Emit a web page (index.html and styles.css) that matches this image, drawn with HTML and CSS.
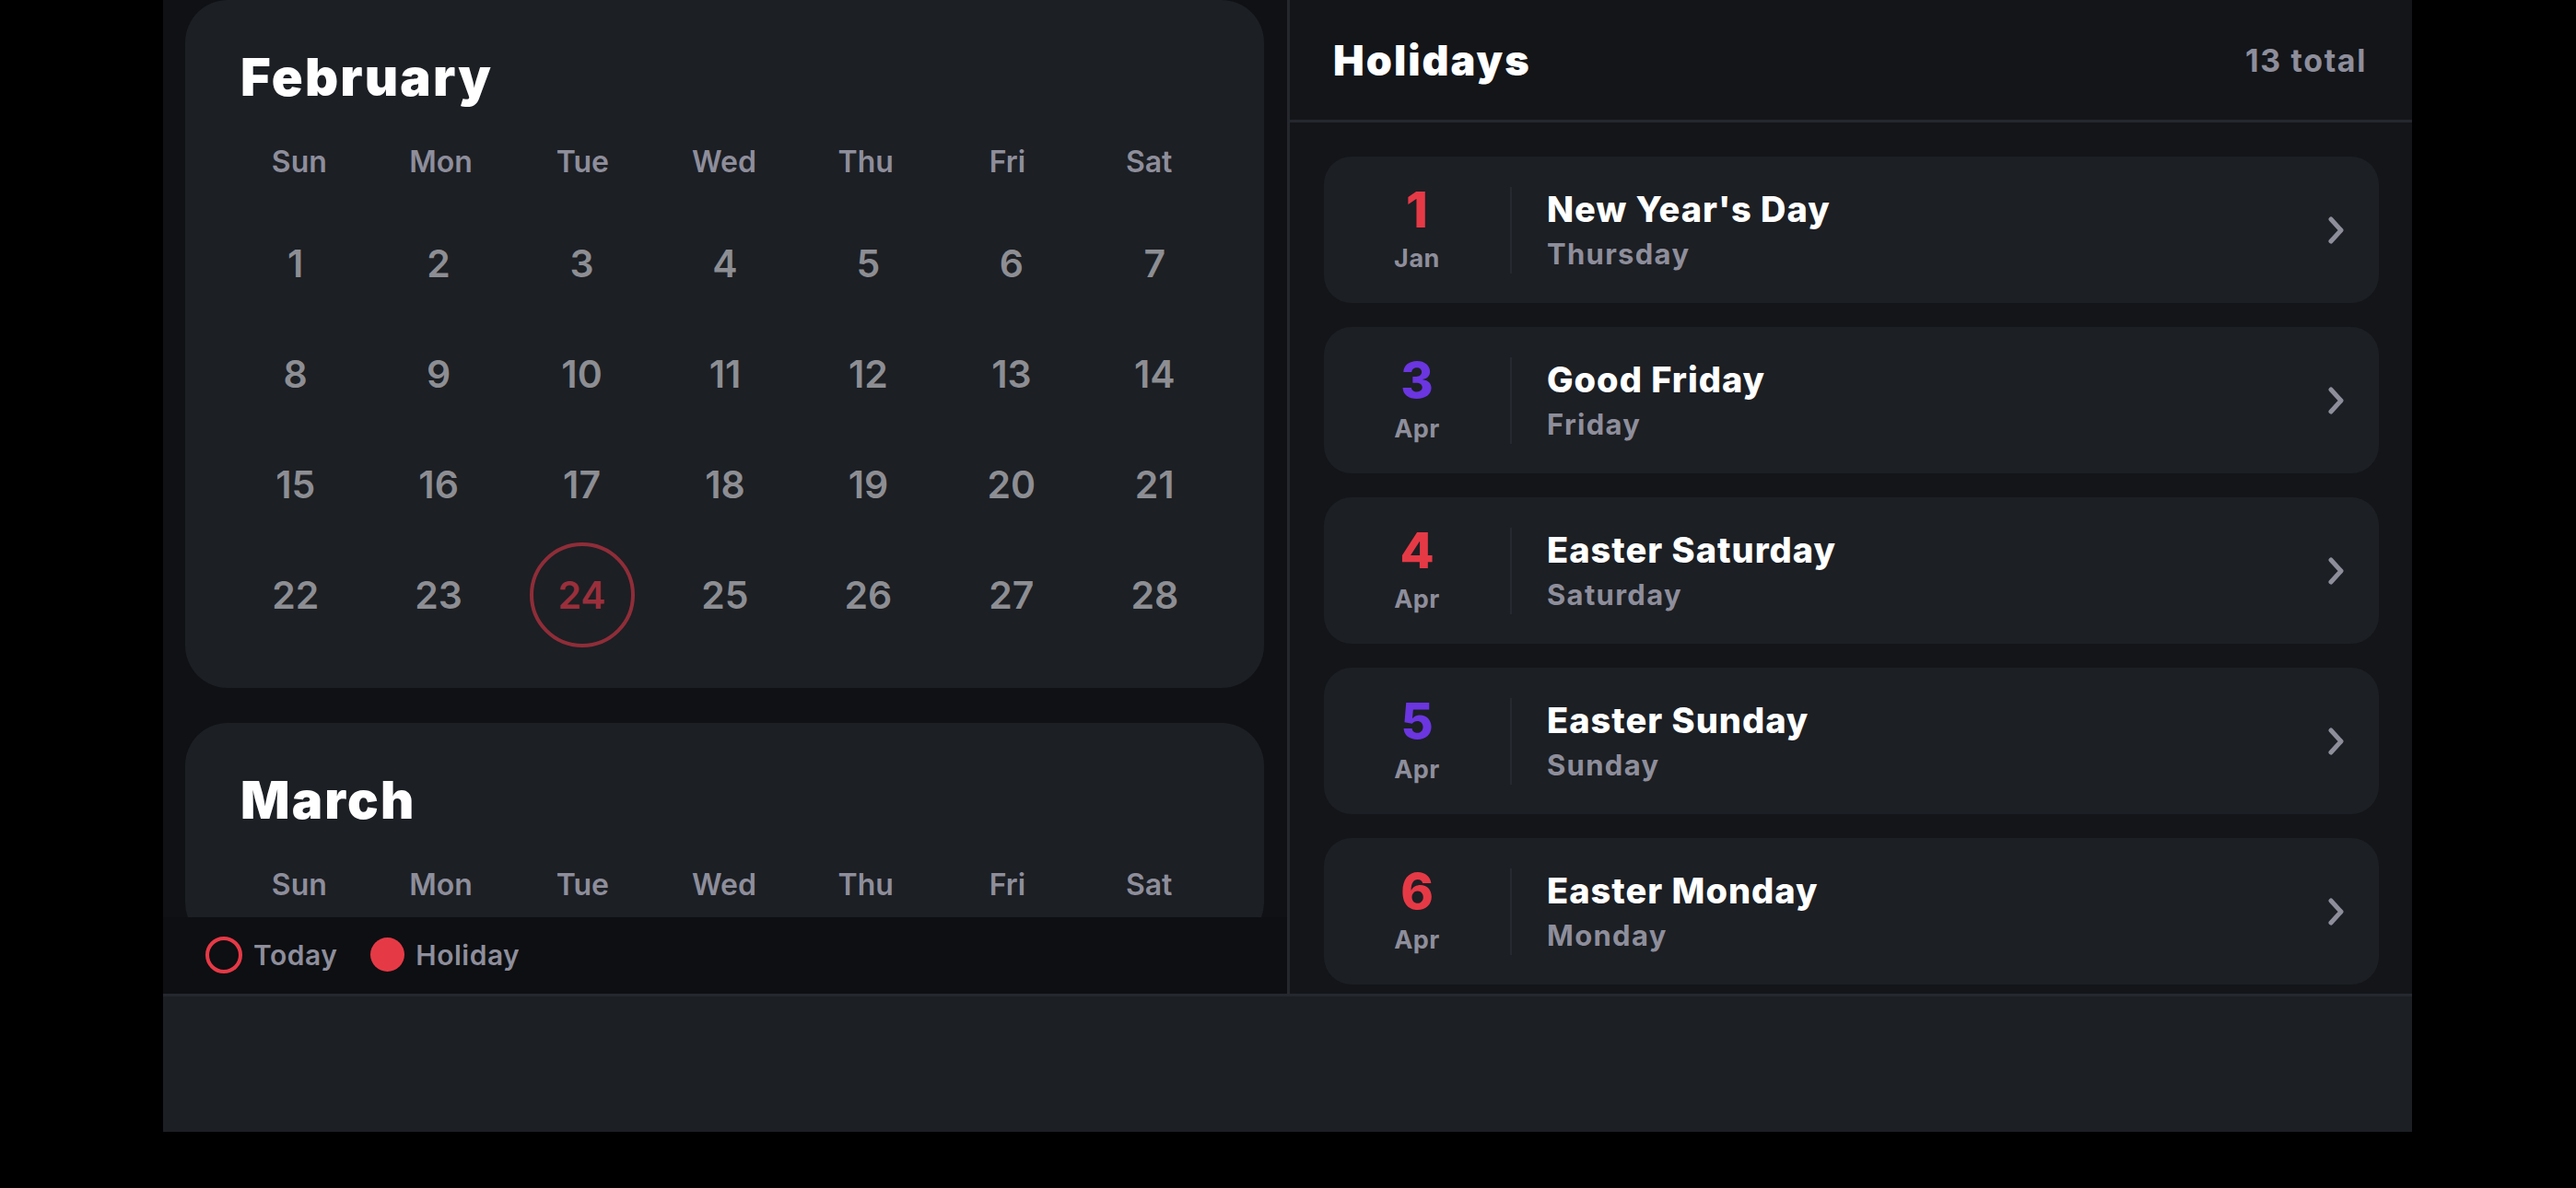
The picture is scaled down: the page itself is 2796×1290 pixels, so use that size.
FILE: index.html
```html
<!DOCTYPE html>
<html lang="en">
<head>
<meta charset="utf-8">
<title>Holidays Calendar</title>
<link rel="stylesheet" href="styles.css">
</head>
<body>
<div class="app">
  <div class="main">
    <section class="left">
      <div class="scroll">
        <div class="month-card">
          <h2 class="month-title">February</h2>
          <div class="weekdays">
            <span>Sun</span><span>Mon</span><span>Tue</span><span>Wed</span><span>Thu</span><span>Fri</span><span>Sat</span>
          </div>
          <div class="days">
            <span class="day">1</span><span class="day">2</span><span class="day">3</span><span class="day">4</span><span class="day">5</span><span class="day">6</span><span class="day">7</span>
            <span class="day">8</span><span class="day">9</span><span class="day">10</span><span class="day">11</span><span class="day">12</span><span class="day">13</span><span class="day">14</span>
            <span class="day">15</span><span class="day">16</span><span class="day">17</span><span class="day">18</span><span class="day">19</span><span class="day">20</span><span class="day">21</span>
            <span class="day">22</span><span class="day">23</span><span class="day today"><span class="today-ring">24</span></span><span class="day">25</span><span class="day">26</span><span class="day">27</span><span class="day">28</span>
          </div>
        </div>
        <div class="month-card">
          <h2 class="month-title">March</h2>
          <div class="weekdays">
            <span>Sun</span><span>Mon</span><span>Tue</span><span>Wed</span><span>Thu</span><span>Fri</span><span>Sat</span>
          </div>
        </div>
      </div>
      <div class="legend">
        <span class="legend-item"><span class="ring"></span>Today</span>
        <span class="legend-item"><span class="dot"></span>Holiday</span>
      </div>
    </section>
    <section class="right">
      <header class="list-header">
        <h1 class="list-title">Holidays</h1>
        <span class="list-count">13 total</span>
      </header>
      <div class="list">
        <div class="holiday">
          <div class="date"><span class="num red">1</span><span class="mon">Jan</span></div>
          <div class="sep"></div>
          <div class="info"><span class="name">New Year's Day</span><span class="weekday">Thursday</span></div>
          <svg class="chev" viewBox="0 0 24 32" width="24" height="32"><path d="M6 4 L17 16 L6 28" fill="none" stroke="#8e8e9b" stroke-width="5" stroke-linecap="round" stroke-linejoin="round"/></svg>
        </div>
        <div class="holiday">
          <div class="date"><span class="num purple">3</span><span class="mon">Apr</span></div>
          <div class="sep"></div>
          <div class="info"><span class="name">Good Friday</span><span class="weekday">Friday</span></div>
          <svg class="chev" viewBox="0 0 24 32" width="24" height="32"><path d="M6 4 L17 16 L6 28" fill="none" stroke="#8e8e9b" stroke-width="5" stroke-linecap="round" stroke-linejoin="round"/></svg>
        </div>
        <div class="holiday">
          <div class="date"><span class="num red">4</span><span class="mon">Apr</span></div>
          <div class="sep"></div>
          <div class="info"><span class="name">Easter Saturday</span><span class="weekday">Saturday</span></div>
          <svg class="chev" viewBox="0 0 24 32" width="24" height="32"><path d="M6 4 L17 16 L6 28" fill="none" stroke="#8e8e9b" stroke-width="5" stroke-linecap="round" stroke-linejoin="round"/></svg>
        </div>
        <div class="holiday">
          <div class="date"><span class="num purple">5</span><span class="mon">Apr</span></div>
          <div class="sep"></div>
          <div class="info"><span class="name">Easter Sunday</span><span class="weekday">Sunday</span></div>
          <svg class="chev" viewBox="0 0 24 32" width="24" height="32"><path d="M6 4 L17 16 L6 28" fill="none" stroke="#8e8e9b" stroke-width="5" stroke-linecap="round" stroke-linejoin="round"/></svg>
        </div>
        <div class="holiday">
          <div class="date"><span class="num red">6</span><span class="mon">Apr</span></div>
          <div class="sep"></div>
          <div class="info"><span class="name">Easter Monday</span><span class="weekday">Monday</span></div>
          <svg class="chev" viewBox="0 0 24 32" width="24" height="32"><path d="M6 4 L17 16 L6 28" fill="none" stroke="#8e8e9b" stroke-width="5" stroke-linecap="round" stroke-linejoin="round"/></svg>
        </div>
      </div>
    </section>
  </div>
  <footer class="bottom"></footer>
</div>
</body>
</html>
```
FILE: styles.css
```css
* { box-sizing: border-box; margin: 0; padding: 0; }
html, body { background: #000; }
body {
  width: 2796px;
  height: 1290px;
  overflow: hidden;
  font-family: Inter, "Noto Sans", "Liberation Sans", sans-serif;
  color: #fff;
}
.app {
  margin-left: 177px;
  width: 2441px;
  height: 1229px;
  display: flex;
  flex-direction: column;
  background: #0f1114;
}
.main {
  height: 1082px;
  display: flex;
  border-bottom: 3px solid #25282e;
}
.left {
  width: 1223px;
  display: flex;
  flex-direction: column;
  border-right: 3px solid #25282e;
  background: #0f1114;
}
.scroll {
  height: 996px;
  overflow: hidden;
  padding: 0 25px 0 24px;
  display: flex;
  flex-direction: column;
  gap: 38px;
}
.month-card {
  flex: none;
  background: #1c1f24;
  border-radius: 46px;
  padding: 52px 48px 41px 47px;
}
.month-title {
  font-size: 56px;
  line-height: 64px;
  font-weight: 900;
  color: #fff;
  padding-left: 13px;
  letter-spacing: 2.2px;
}
.weekdays {
  margin-top: 36px;
  display: grid;
  grid-template-columns: repeat(7, 1fr);
  height: 48px;
  line-height: 48px;
  font-size: 32px;
  font-weight: 600;
  color: #8e8e9b;
  text-align: center;
}
.days {
  margin: 26px -6px 0 -6px;
  display: grid;
  grid-template-columns: repeat(7, 1fr);
  grid-auto-rows: 120px;
}
.day {
  display: flex;
  align-items: center;
  justify-content: center;
  font-size: 41px;
  font-weight: 600;
  color: #8d8e93;
  padding-left: 2px;
}
.today-ring {
  width: 114px;
  height: 114px;
  border-radius: 50%;
  border: 4.5px solid #8f2d38;
  color: #9a2f3b;
  display: flex;
  align-items: center;
  justify-content: center;
}
.legend {
  flex: 1;
  background: #0d0f12;
  display: flex;
  align-items: center;
  gap: 36px;
  padding-left: 46px;
  padding-bottom: 2px;
}
.legend-item {
  display: flex;
  align-items: center;
  gap: 12px;
  font-size: 30px;
  font-weight: 600;
  color: #8e8e9b;
  letter-spacing: 0.5px;
}
.ring {
  width: 40px;
  height: 40px;
  border-radius: 50%;
  border: 4px solid #e63946;
}
.dot {
  width: 37px;
  height: 37px;
  border-radius: 50%;
  background: #e63946;
}
.right {
  flex: 1;
  display: flex;
  flex-direction: column;
  background: #131519;
}
.list-header {
  height: 133px;
  border-bottom: 3px solid #25282e;
  display: flex;
  align-items: center;
  justify-content: space-between;
  padding: 0 49px 0 47px;
}
.list-title {
  font-size: 45px;
  font-weight: 900;
  color: #fff;
  letter-spacing: 2px;
}
.list-count {
  font-size: 34px;
  font-weight: 700;
  color: #8e8e9b;
  letter-spacing: 1.6px;
}
.list {
  flex: 1;
  overflow: hidden;
  padding: 37px 36px 0 37px;
  display: flex;
  flex-direction: column;
  gap: 26px;
}
.holiday {
  flex: none;
  height: 159px;
  background: #1c1f24;
  border-radius: 30px;
  display: flex;
  align-items: center;
  padding-right: 34px;
}
.date {
  width: 202px;
  display: flex;
  flex-direction: column;
  align-items: center;
  gap: 10px;
  margin-top: -2px;
}
.num {
  font-size: 54px;
  line-height: 54px;
  font-weight: 800;
}
.red { color: #e63946; }
.purple { color: #6b35e0; }
.mon {
  font-size: 27px;
  line-height: 32px;
  font-weight: 700;
  color: #8e8e9b;
  letter-spacing: 0.5px;
}
.sep {
  width: 2px;
  height: 94px;
  background: #262930;
}
.info {
  flex: 1;
  display: flex;
  flex-direction: column;
  gap: 8px;
  padding-left: 38px;
}
.name {
  font-size: 38px;
  line-height: 44px;
  font-weight: 800;
  color: #fff;
  letter-spacing: 1px;
}
.weekday {
  font-size: 31px;
  line-height: 38px;
  font-weight: 700;
  color: #8e8e9b;
  letter-spacing: 1.3px;
}
.chev { flex: none; }
.bottom {
  flex: 1;
  background: #1c1f24;
}
```
